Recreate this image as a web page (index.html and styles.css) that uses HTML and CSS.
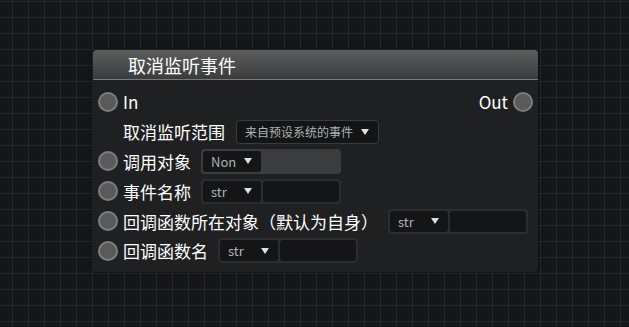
FILE: index.html
```html
<!DOCTYPE html>
<html lang="zh-CN">
<head>
    <meta charset="UTF-8">
    <title>取消监听事件</title>
    <link rel="stylesheet" href="styles.css">
</head>
<body>
    <div class="canvas">
        <div class="node">
            <div class="node-header">取消监听事件</div>
            <div class="node-body">
                <div class="row">
                    <span class="port"></span>
                    <span class="label">In</span>
                    <span class="spacer"></span>
                    <span class="label">Out</span>
                    <span class="port port-out"></span>
                </div>
                <div class="row row-indent">
                    <span class="label">取消监听范围</span>
                    <div class="select-box">
                        <span>来自预设系统的事件</span>
                        <span class="arrow"></span>
                    </div>
                </div>
                <div class="row">
                    <span class="port"></span>
                    <span class="label">调用对象</span>
                    <div class="combo combo-empty">
                        <div class="combo-type"><span>Non</span><span class="arrow"></span></div>
                    </div>
                </div>
                <div class="row">
                    <span class="port"></span>
                    <span class="label">事件名称</span>
                    <div class="combo">
                        <div class="combo-type"><span>str</span><span class="arrow"></span></div>
                        <div class="combo-input"></div>
                    </div>
                </div>
                <div class="row">
                    <span class="port"></span>
                    <span class="label">回调函数所在对象（默认为自身）</span>
                    <div class="combo">
                        <div class="combo-type"><span>str</span><span class="arrow"></span></div>
                        <div class="combo-input"></div>
                    </div>
                </div>
                <div class="row">
                    <span class="port"></span>
                    <span class="label">回调函数名</span>
                    <div class="combo">
                        <div class="combo-type"><span>str</span><span class="arrow"></span></div>
                        <div class="combo-input"></div>
                    </div>
                </div>
            </div>
        </div>
    </div>
</body>
</html>
```

FILE: styles.css
```css
html, body {
    margin: 0;
    padding: 0;
}

body {
    font-family: "Noto Sans CJK SC", "Noto Sans", sans-serif;
    background-color: #151618;
}

.canvas {
    position: relative;
    width: 629px;
    height: 327px;
    overflow: hidden;
    background-color: #151618;
    background-image:
        linear-gradient(to right, #27282a 1px, transparent 1px),
        linear-gradient(to bottom, #27282a 1px, transparent 1px);
    background-size: 16px 16px;
    background-position: 12px 1px;
}

.node {
    position: absolute;
    left: 93px;
    top: 50px;
    width: 445px;
    height: 222px;
    background-color: #1f2021;
    border-radius: 4px;
    box-shadow: 0 0 4px rgba(0, 0, 0, 0.4);
    overflow: hidden;
}

.node-header {
    height: 29px;
    line-height: 31px;
    padding-left: 35px;
    font-size: 18px;
    color: #fff;
    background: linear-gradient(to bottom, #5c5d5d, #3a3b3c);
    border-bottom: 1px solid #7a7a7a;
}

.node-body {
    padding: 7px 5px 0 5px;
}

.row {
    display: flex;
    align-items: center;
    height: 29.8px;
}

.row-indent {
    padding-left: 25px;
}

.port {
    width: 16px;
    height: 16px;
    border: 2px solid #7e7e7e;
    border-radius: 50%;
    background-color: #5a5a5a;
    margin-right: 5px;
    flex-shrink: 0;
}

.port-out {
    margin-right: 0;
    margin-left: 5px;
}

.spacer {
    flex: 1;
}

.label {
    font-size: 17px;
    color: #fff;
    white-space: nowrap;
}

.select-box {
    display: flex;
    align-items: center;
    justify-content: space-between;
    width: 124px;
    height: 22px;
    margin-left: 11px;
    padding: 0 9px 0 8px;
    border: 1px solid #3a3b3c;
    border-radius: 4px;
    background-color: #131415;
    font-size: 12px;
    color: #aeb3b7;
}

.arrow {
    width: 0;
    height: 0;
    border-left: 4px solid transparent;
    border-right: 4px solid transparent;
    border-top: 6px solid #e0e0e0;
}

.combo {
    display: flex;
    gap: 2px;
    width: 136px;
    height: 21px;
    margin-left: 10px;
    padding: 2px;
    border-radius: 4px;
    background-color: #2c2d2e;
}

.combo-empty {
    background-color: #3b3c3d;
}

.combo-type {
    display: flex;
    align-items: center;
    justify-content: space-between;
    width: 41px;
    padding: 0 9px 0 8px;
    border-radius: 3px;
    background-color: #141516;
    font-size: 13px;
    color: #aeb3b7;
}

.combo-input {
    flex: 1;
    border-radius: 3px;
    background-color: #141516;
}
```
